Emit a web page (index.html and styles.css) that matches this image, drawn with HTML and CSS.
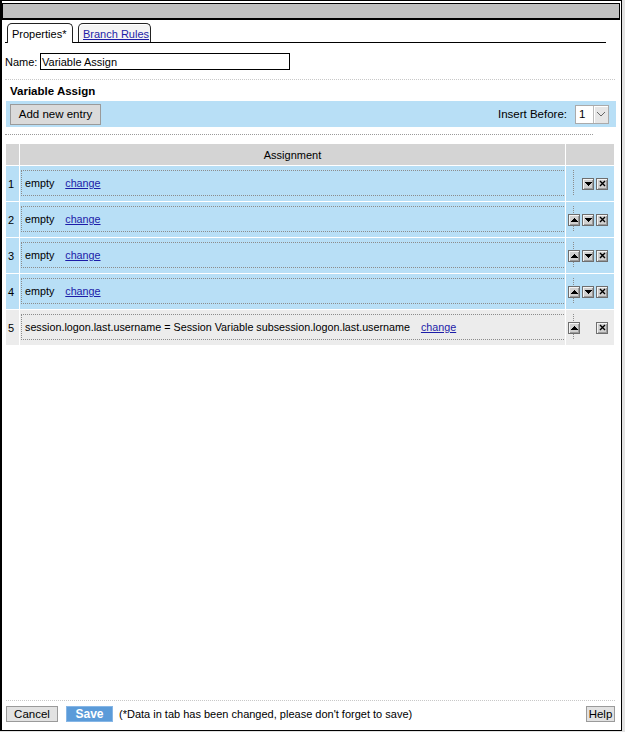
FILE: index.html
```html
<!DOCTYPE html>
<html>
<head>
<meta charset="utf-8">
<link rel="stylesheet" href="styles.css">
</head>
<body>
<div class="window">
  <div class="titlebar"></div>
  <div class="tabs">
    <span class="tab active">Properties*</span>
    <span class="tab"><a href="#">Branch Rules</a></span>
  </div>
  <div class="content">
    <div class="name-row">
      <label>Name:</label>
      <span class="input">Variable Assign</span>
    </div>
    <div class="sep-light"></div>
    <div class="section-title">Variable Assign</div>
    <div class="toolbar">
      <span class="btn">Add new entry</span>
      <span class="insert">Insert Before:
        <span class="select"><span class="sel-val">1</span><span class="sel-btn"><svg width="10" height="6" viewBox="0 0 10 6"><path d="M1 1l4 4 4-4" fill="none" stroke="#666" stroke-width="1"/></svg></span></span>
      </span>
    </div>
    <div class="sep-dark"></div>
    <table class="grid">
      <thead>
        <tr><th class="c-idx"></th><th class="c-main">Assignment</th><th class="c-act"></th></tr>
      </thead>
      <tbody>
        <tr class="blue">
          <td class="c-idx">1</td>
          <td class="c-main"><div class="box">empty <a href="#">change</a></div></td>
          <td class="c-act"><div class="acts"><span class="ib ghost"></span><span class="ib"><svg width="7" height="4" viewBox="0 0 7 4"><path d="M0 0h7v1H0zM1 1h5v1H1zM2 2h3v1H2zM3 3h1v1H3z" fill="#000"/></svg></span><span class="ib"><svg width="7" height="7" viewBox="0 0 7 7"><path d="M1 1l5 5M6 1l-5 5" stroke="#000" stroke-width="1.4"/></svg></span></div></td>
        </tr>
        <tr class="blue">
          <td class="c-idx">2</td>
          <td class="c-main"><div class="box">empty <a href="#">change</a></div></td>
          <td class="c-act"><div class="acts"><span class="ib"><svg width="7" height="4" viewBox="0 0 7 4"><path d="M3 0h1v1H3zM2 1h3v1H2zM1 2h5v1H1zM0 3h7v1H0z" fill="#000"/></svg></span><span class="ib"><svg width="7" height="4" viewBox="0 0 7 4"><path d="M0 0h7v1H0zM1 1h5v1H1zM2 2h3v1H2zM3 3h1v1H3z" fill="#000"/></svg></span><span class="ib"><svg width="7" height="7" viewBox="0 0 7 7"><path d="M1 1l5 5M6 1l-5 5" stroke="#000" stroke-width="1.4"/></svg></span></div></td>
        </tr>
        <tr class="blue">
          <td class="c-idx">3</td>
          <td class="c-main"><div class="box">empty <a href="#">change</a></div></td>
          <td class="c-act"><div class="acts"><span class="ib"><svg width="7" height="4" viewBox="0 0 7 4"><path d="M3 0h1v1H3zM2 1h3v1H2zM1 2h5v1H1zM0 3h7v1H0z" fill="#000"/></svg></span><span class="ib"><svg width="7" height="4" viewBox="0 0 7 4"><path d="M0 0h7v1H0zM1 1h5v1H1zM2 2h3v1H2zM3 3h1v1H3z" fill="#000"/></svg></span><span class="ib"><svg width="7" height="7" viewBox="0 0 7 7"><path d="M1 1l5 5M6 1l-5 5" stroke="#000" stroke-width="1.4"/></svg></span></div></td>
        </tr>
        <tr class="blue">
          <td class="c-idx">4</td>
          <td class="c-main"><div class="box">empty <a href="#">change</a></div></td>
          <td class="c-act"><div class="acts"><span class="ib"><svg width="7" height="4" viewBox="0 0 7 4"><path d="M3 0h1v1H3zM2 1h3v1H2zM1 2h5v1H1zM0 3h7v1H0z" fill="#000"/></svg></span><span class="ib"><svg width="7" height="4" viewBox="0 0 7 4"><path d="M0 0h7v1H0zM1 1h5v1H1zM2 2h3v1H2zM3 3h1v1H3z" fill="#000"/></svg></span><span class="ib"><svg width="7" height="7" viewBox="0 0 7 7"><path d="M1 1l5 5M6 1l-5 5" stroke="#000" stroke-width="1.4"/></svg></span></div></td>
        </tr>
        <tr class="grey">
          <td class="c-idx">5</td>
          <td class="c-main"><div class="box">session.logon.last.username = Session Variable subsession.logon.last.username <a href="#">change</a></div></td>
          <td class="c-act"><div class="acts"><span class="ib"><svg width="7" height="4" viewBox="0 0 7 4"><path d="M3 0h1v1H3zM2 1h3v1H2zM1 2h5v1H1zM0 3h7v1H0z" fill="#000"/></svg></span><span class="ib ghost"></span><span class="ib"><svg width="7" height="7" viewBox="0 0 7 7"><path d="M1 1l5 5M6 1l-5 5" stroke="#000" stroke-width="1.4"/></svg></span></div></td>
        </tr>
      </tbody>
    </table>
  </div>
  <div class="footer">
    <span class="btn small">Cancel</span>
    <span class="btn save">Save</span>
    <span class="note">(*Data in tab has been changed, please don't forget to save)</span>
    <span class="spacer"></span>
    <span class="btn small help">Help</span>
  </div>
</div>
</body>
</html>
```

FILE: styles.css
```css
html, body {
  margin: 0;
  padding: 0;
}
body {
  background: #e2e2e2;
  font-family: "Liberation Sans", Arial, sans-serif;
  font-size: 11px;
  color: #000;
  width: 625px;
  height: 732px;
  overflow: hidden;
}
a {
  color: #1c1ca8;
  text-decoration: underline;
}
.window {
  box-sizing: border-box;
  width: 622px;
  height: 731px;
  background: #fff;
  border: 1px solid #000;
  border-left-width: 2px;
  display: flex;
  flex-direction: column;
}
.titlebar {
  height: 14px;
  margin: 2px 1px 0 0;
  background: #c0c0c0;
  border: 1px solid #000;
  border-bottom-width: 2px;
}
.tabs {
  display: flex;
  align-items: flex-end;
  gap: 5px;
  margin: 3px 15px 0 3px;
  padding-left: 2px;
  border-bottom: 1px solid #000;
  height: 19px;
}
.tab {
  box-sizing: border-box;
  height: 19px;
  padding: 3px 4px 0 4px;
  border: 1px solid #222;
  border-bottom: none;
  border-radius: 5px 5px 0 0;
  background: #f4f4f4;
  box-shadow: inset 1px 1px 0 #fff;
  font-size: 11px;
  line-height: 14px;
  white-space: nowrap;
}
.tab.active {
  background: #fff;
  height: 20px;
  margin-bottom: -1px;
  width: 66px;
}
.tab + .tab {
  width: 73px;
}
.content {
  flex: 1;
  padding: 0 0 0 3px;
}
.name-row {
  display: flex;
  align-items: center;
  margin-top: 10px;
  height: 17px;
}
.name-row label {
  width: 35px;
}
.input {
  box-sizing: border-box;
  width: 250px;
  height: 17px;
  border: 1px solid #000;
  padding: 1px 1px;
  line-height: 14px;
}
.sep-light {
  margin: 9px 6px 0 0;
  border-top: 1px dotted #c8c8c8;
}
.section-title {
  font-weight: bold;
  margin: 4px 0 0 5px;
  height: 17px;
  line-height: 14px;
  font-size: 11.5px;
}
.toolbar {
  box-sizing: border-box;
  width: 610px;
  height: 26px;
  margin-left: 1px;
  background: #b8dff6;
  display: flex;
  align-items: center;
  justify-content: space-between;
  padding: 0 7px 0 4px;
}
.btn {
  box-sizing: border-box;
  display: inline-flex;
  align-items: center;
  justify-content: center;
  background: #dadada;
  border: 1px solid #9a9a9a;
  height: 21px;
  width: 91px;
  font-size: 11.5px;
}
.insert {
  display: flex;
  align-items: center;
  gap: 8px;
  font-size: 11.5px;
}
.select {
  display: flex;
  box-sizing: border-box;
  height: 19px;
  width: 34px;
  border: 1px solid #aaa;
  background: #fff;
}
.sel-val {
  width: 14px;
  padding-left: 3px;
  line-height: 17px;
}
.sel-btn {
  flex: 1;
  background: #e6e6e6;
  border-left: 1px solid #bbb;
  display: flex;
  align-items: center;
  justify-content: center;
  box-shadow: inset 1px 1px 0 #fff;
}
.sep-dark {
  width: 588px;
  margin: 7px 0 0 0;
  border-top: 1px dotted #9a9a9a;
}
.grid {
  margin: 8px 0 0 0;
  border-collapse: separate;
  border-spacing: 1px;
  width: 610px;
  table-layout: fixed;
}
.grid th {
  background: #d4d4d4;
  height: 21px;
  padding: 0;
  font-weight: normal;
  font-size: 11px;
}
.grid td {
  padding: 0;
  height: 35px;
  box-sizing: border-box;
}
.c-idx {
  width: 13px;
}
.c-act {
  width: 48px;
}
.grid td.c-idx {
  padding-left: 2px;
}
.grid tr.blue td {
  background: #b8dff6;
}
.grid tr.grey td {
  background: #ececec;
}
.box {
  box-sizing: border-box;
  margin: 4px 1px 0 1px;
  height: 26px;
  border: 1px dotted #8c8c8c;
  border-right: none;
  display: flex;
  align-items: center;
  padding-left: 3px;
  white-space: pre;
  font-size: 10.75px;
}
.box a {
  margin-left: 8px;
}
.grid tbody td.c-act {
  vertical-align: middle;
  background-image: repeating-linear-gradient(to bottom, #8c8c8c 0 1px, transparent 1px 2px);
  background-size: 1px 26px;
  background-position: 7px 4px;
  background-repeat: no-repeat;
}
.grid tbody td.c-main {
  vertical-align: top;
}
.acts {
  display: flex;
  gap: 2px;
  padding-left: 2px;
}
.ib {
  box-sizing: border-box;
  width: 12px;
  height: 12px;
  border: 1px solid #6e6e6e;
  background: #d0d0d0;
  box-shadow: inset 1px 1px 0 #f4f4f4, inset -1px -1px 0 #9c9c9c;
  display: flex;
  align-items: center;
  justify-content: center;
}
.ib.ghost {
  visibility: hidden;
}
.footer {
  display: flex;
  align-items: center;
  gap: 8px;
  margin: 0 6px 0 4px;
  border-top: 1px dotted #c8c8c8;
  padding: 5px 0 8px 0;
}
.btn.small {
  width: 52px;
  height: 16px;
  background: #e2e2e2;
  font-size: 11.5px;
}
.btn.save {
  width: 47px;
  height: 16px;
  background: #5b9bd9;
  border-color: #86b6e6;
  color: #fff;
  font-weight: bold;
  font-size: 12px;
}
.note {
  margin-left: -2px;
  font-size: 11px;
}
.spacer {
  flex: 1;
}
.btn.small.help {
  width: 29px;
}
```
